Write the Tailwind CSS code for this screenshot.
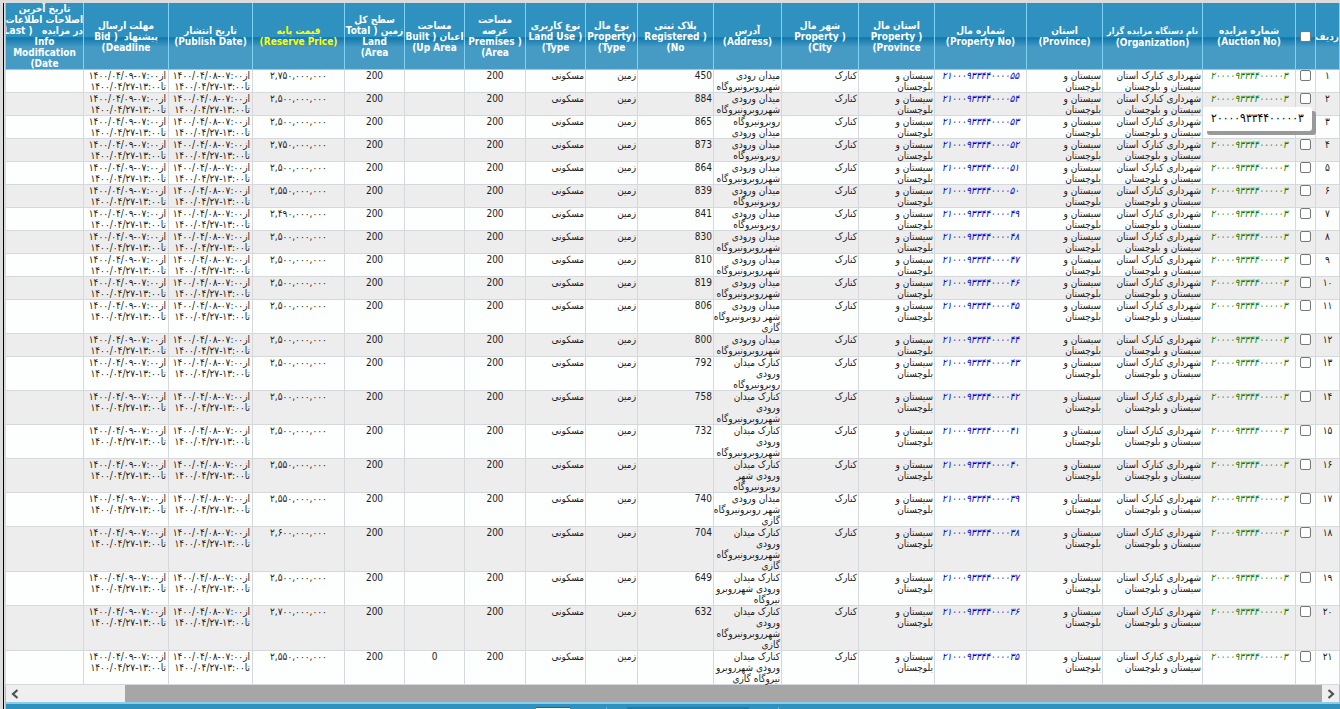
<!DOCTYPE html>
<html lang="fa">
<head>
<meta charset="utf-8">
<title>مزایده</title>
<script src="https://cdn.jsdelivr.net/npm/@tailwindcss/browser@4"></script>
</head>
<body class="min-h-screen overflow-hidden bg-[#dcdcdc] font-['DejaVu_Sans_Condensed','DejaVu_Sans',sans-serif] text-[10px] leading-[11px] text-[#1c1c1c]">
<div class="flex h-screen flex-col pt-[3px] pl-[3px]">
<main class="flex min-h-0 flex-1 flex-col border-l border-black pl-px">
  <div class="border-x border-[#8fcbe8] bg-[#fdfffe]">
    <table dir="rtl" class="-ml-px w-full table-fixed border-collapse">
      <colgroup>
        <col class="w-[24px]"><col class="w-[20px]"><col class="w-[93px]"><col class="w-[100px]"><col class="w-[76px]"><col class="w-[92px]"><col class="w-[76px]"><col class="w-[77px]"><col class="w-[68px]"><col class="w-[76px]"><col class="w-[52px]"><col class="w-[60px]"><col class="w-[61px]"><col class="w-[60px]"><col class="w-[60px]"><col class="w-[92px]"><col class="w-[84px]"><col class="w-[85px]"><col class="w-[78px]">
      </colgroup>
      <thead><tr id="head" class="bg-linear-to-b from-[#2e91bf] from-50% via-[#0a78ad] via-52% to-[#459bc4] to-66% text-white"></tr></thead>
      <tbody id="rows"></tbody>
    </table>
    <div class="flex h-[17px] items-stretch bg-[#efefef]">
      <button aria-label="Scroll left" class="flex w-[17px] items-center justify-center"><svg width="8" height="10" viewBox="0 0 8 10" fill="none" stroke="#505050" stroke-width="2.2"><path d="M6.500 1L2 5l4.500 4"/></svg></button>
      <div class="flex flex-1 pl-[102px]"><div class="flex-1 bg-[#a6a6a6]"></div></div>
      <button aria-label="Scroll right" class="flex w-[17px] items-center justify-center"><svg width="8" height="10" viewBox="0 0 8 10" fill="none" stroke="#505050" stroke-width="2.2"><path d="M1.500 1L6 5l-4.500 4"/></svg></button>
    </div>
  </div>
  <footer class="flex h-[30px] shrink-0 items-start border-t-2 border-l border-[#8fcbe8] bg-[#2e91bf] pt-[3px]">
    <div class="flex flex-1 justify-center gap-[36px] pr-[32px]">
      <input aria-label="Page" class="h-[18px] w-[34px] border-t border-[#17668f] bg-white">
      <div class="flex border-x border-[#6fb9dc] pr-[29px] pl-[20px]"><button aria-label="Page size" class="h-[18px] w-[122px] bg-[#1d7eae]"></button></div>
    </div>
  </footer>
</main>
</div>
<script>
const heads = [
  'ردیف', '', 'شماره مزایده\n(Auction No)', '<span class="text-[9px]">نام دستگاه مزایده گزار</span>\n(Organization)', 'استان\n(Province)',
  'شماره مال\n(Property No)', 'استان مال\n( Property\nProvince)', 'شهر مال\n( Property\nCity)', 'آدرس\n(Address)',
  'پلاک ثبتی\n( Registered\nNo)', 'نوع مال\n(Property\nType)', 'نوع کاربری\n( Land Use\nType)',
  'مساحت\nعرصه\n( Premises\nArea)', 'مساحت\nاعیان ( Built\nUp Area)', 'سطح کل\nزمین ( Total\nLand\nArea)',
  'قیمت پایه\n(Reserve Price)', 'تاریخ انتشار\n(Publish Date)', 'مهلت ارسال\nپیشنهاد  ( Bid\nDeadline)',
  'تاریخ آخرین\nاصلاحات اطلاعات\nدر مزایده   ( Last\nInfo\nModification\nDate)'
];
const fa = s => String(s).replace(/\d/g, d => '۰۱۲۳۴۵۶۷۸۹'[d]);
const auction = fa('2000093344000003');
const A = 'میدان ورودی\nشهرروبرونیروگاه', B = 'میدان ورودی\nروبرونیروگاه', C = 'میدان ورودی\nشهر روبرونیروگاه\nگازی';
const D = 'کنارک میدان\nورودی\n';
const data = [
  ['450', 'میدان رودی\nشهرروبرونیروگاه', 750], ['884', A, 500], ['865', 'روبرونیروگاه\nمیدان ورودی', 500], ['873', B, 750],
  ['864', A, 500], ['839', B, 550], ['841', B, 490], ['830', A, 500], ['810', A, 500], ['819', A, 500],
  ['806', C, 500], ['800', A, 500], ['792', D + 'روبرونیروگاه', 500], ['758', D + 'شهرروبرونیروگاه', 500],
  ['732', D + 'شهرروبرونیروگاه', 500], ['', 'کنارک میدان\nورودی شهر\nروبرونیروگاه', 550], ['740', C, 550],
  ['704', D + 'شهرروبرونیروگاه\nگازی', 600], ['649', 'کنارک میدان\nورودی شهرروبرو\nنیروگاه', 500],
  ['632', D + 'شهرروبرونیروگاه\nگازی', 700], ['', 'کنارک میدان\nورودی شهرروبرو\nنیروگاه گازی', 550]
];
const box = label => `<input type="checkbox" aria-label="${label}" class="mx-auto block size-[11px] appearance-none rounded-[2px] border border-[#777] bg-white">`;
document.getElementById('head').innerHTML = heads.map((h, i) =>
  `<th scope="col" class="h-[66px] overflow-hidden border-x border-b border-[#7fd3f4] p-0 text-center align-middle font-bold whitespace-pre ${i === 15 ? 'text-[#ffff00]' : ''}">${i === 1 ? box('همه') : h}</th>`).join('');
const td = (content, align) => `<td class="border border-t-0 border-[#d5d9db] p-0 align-top whitespace-pre ${align}">${content}</td>`;
const R = 'pr-px text-right', M = 'text-center';
const dates = day => `از<bdi dir="ltr">${fa('1400/04/' + day + '-07:00')}</bdi>\nتا<bdi dir="ltr">${fa('1400/04/27-13:00')}</bdi>`;
const tip = `<div role="tooltip" class="absolute -top-[9px] right-[-17px] left-0 flex h-[24px] items-center justify-center rounded-[3px] bg-white pb-px text-[12px] text-black shadow-[4px_4px_0_#999]">${auction}</div>`;
document.getElementById('rows').innerHTML = data.map(([plate, address, price], i) =>
  `<tr class="odd:bg-[#fdfffe] even:bg-[#ededed]">` + [
    td(fa(i + 1), M), td(box('ردیف ' + fa(i + 1)), M),
    i === 2 ? td(tip, 'relative') : td(`<a href="#" class="text-[#0a7d0a] italic">${auction}</a>`, M),
    td('شهرداری کنارک استان\nسیستان و بلوچستان', R), td('سیستان و\nبلوچستان', R),
    td(`<a href="#" class="text-[#0000d0] italic">${fa('21000933440000' + (55 - i))}</a>`, M),
    td('سیستان و\nبلوچستان', R), td('کنارک', R), td(address, R), td(plate, R), td('زمین', R), td('مسکونی', R),
    td('200', M), td(i === 20 ? '0' : '', M), td('200', M),
    td(`<bdi dir="ltr">${fa('2,' + price + ',000,000')}</bdi>`, M),
    td(dates('08'), 'pr-[2px] text-right'), td(dates('09'), 'pr-[2px] text-right'), td('', M)
  ].join('') + '</tr>').join('');
</script>
</body>
</html>
